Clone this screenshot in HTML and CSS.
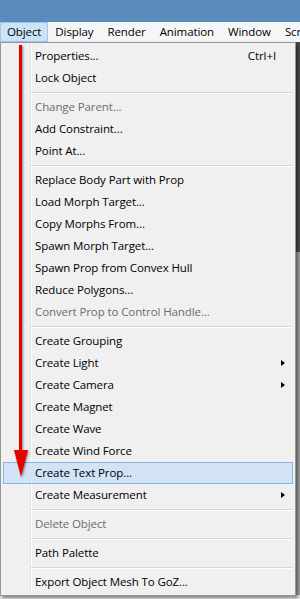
FILE: index.html
```html
<!doctype html>
<html>
  <head>
    <meta charset="utf-8">
    <title>Object menu</title>
    <link rel="stylesheet" href="styles.css">
  </head>
  <body>
    <div class="titlebar"></div>
    <nav class="menubar">
      <span class="menu-title active">Object</span>
      <span class="menu-title">Display</span>
      <span class="menu-title">Render</span>
      <span class="menu-title">Animation</span>
      <span class="menu-title">Window</span>
      <span class="menu-title">Scripts</span>
    </nav>
    <div class="workspace">
      <div class="viewport"></div>
      <div class="dock"></div>

      <div class="dropdown">
        <div class="item"><span class="label">Properties...</span><span class="shortcut">Ctrl+I</span></div>
        <div class="item">Lock Object</div>
        <div class="sep"></div>
        <div class="item disabled">Change Parent...</div>
        <div class="item">Add Constraint...</div>
        <div class="item">Point At...</div>
        <div class="sep"></div>
        <div class="item">Replace Body Part with Prop</div>
        <div class="item">Load Morph Target...</div>
        <div class="item">Copy Morphs From...</div>
        <div class="item">Spawn Morph Target...</div>
        <div class="item">Spawn Prop from Convex Hull</div>
        <div class="item">Reduce Polygons...</div>
        <div class="item disabled">Convert Prop to Control Handle...</div>
        <div class="sep"></div>
        <div class="item">Create Grouping</div>
        <div class="item sub">Create Light</div>
        <div class="item sub">Create Camera</div>
        <div class="item">Create Magnet</div>
        <div class="item">Create Wave</div>
        <div class="item">Create Wind Force</div>
        <div class="item hover">Create Text Prop...</div>
        <div class="item sub">Create Measurement</div>
        <div class="sep"></div>
        <div class="item disabled">Delete Object</div>
        <div class="sep"></div>
        <div class="item">Path Palette</div>
        <div class="sep"></div>
        <div class="item">Export Object Mesh To GoZ...</div>
      </div>

      <svg class="arrow" width="20" height="440" viewBox="0 0 20 440">
        <rect x="6" y="0" width="3" height="410" fill="#e60000"/>
        <polygon points="1,405 15,405 8,432" fill="#e60000"/>
      </svg>
    </div>
  </body>
</html>
```

FILE: styles.css
```css
body {
  margin: 0;
  width: 300px;
  height: 599px;
  overflow: hidden;
  font-family: "Open Sans", "Noto Sans", sans-serif;
  font-size: 11.5px;
  letter-spacing: -0.1px;
  color: #000;
  background: #e9e9e9;
}

.titlebar {
  height: 22px;
  background: #5a8bbd;
}

.menubar {
  display: flex;
  height: 20px;
  background: #f5f6f7;
  white-space: nowrap;
  overflow: hidden;
}
.menu-title {
  display: flex;
  align-items: center;
  padding: 0 6px 1px;
  border: 1px solid transparent;
}
.menu-title.active {
  background: #cde4f7;
  border-color: #9dc6ee;
}

.workspace {
  position: relative;
  height: 557px;
}
.viewport { height: 210px; background: #4b4b4b; }
.dock { height: 343px; background: #a3a3a3; }

/* popup menu lies over the workspace */
.dropdown {
  position: absolute;
  left: 0;
  top: 0;
  width: 290px;
  padding: 2px;
  border: 1px solid #979797;
  background:
    linear-gradient(to right, transparent 29px, #e2e3e3 29px, #e2e3e3 30px, #fff 30px, #fff 31px, transparent 31px),
    #f0f0f0;
  box-shadow: 2px 2px 3px rgba(0, 0, 0, 0.45);
}
.item {
  display: flex;
  align-items: center;
  height: 22px;
  padding: 0 16px 1px 31px;
  box-sizing: border-box;
  border: 1px solid transparent;
  white-space: nowrap;
}
.item .label { flex: 1; }
.item.disabled { color: #6d6d6d; }
.item.hover {
  background: #d1e3f5;
  border-color: #84b6e6;
}
.item.sub { position: relative; }
.item.sub::after {
  content: "";
  position: absolute;
  right: 7px;
  top: 7px;
  border-left: 4px solid #000;
  border-top: 3.5px solid transparent;
  border-bottom: 3.5px solid transparent;
}
.sep {
  height: 7px;
  margin-left: 28px;
  background: linear-gradient(#0000 3px, #d7d7d7 3px, #d7d7d7 4px, #fff 4px, #fff 5px, #0000 5px);
}

.arrow {
  position: absolute;
  left: 13px;
  top: 3px;
  filter: drop-shadow(1px 1px 1px rgba(0, 0, 0, 0.45));
}
```
